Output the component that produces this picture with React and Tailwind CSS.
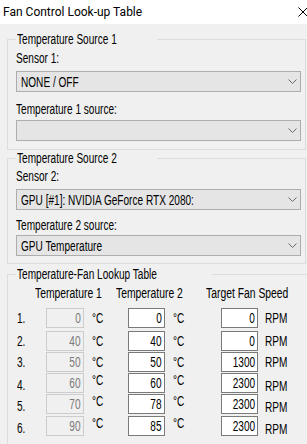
import React from "react";

function T({ children, className = "" }) {
  return (
    <span
      className={
        "inline-block origin-left scale-x-[0.72] whitespace-nowrap text-[14px] leading-[14px] align-top " +
        className
      }
    >
      {children}
    </span>
  );
}

function Chevron() {
  return (
    <svg width="9" height="5" viewBox="0 0 9 5" className="shrink-0">
      <path d="M0.5 0.5 L4.5 4.5 L8.5 0.5" fill="none" stroke="#6a6a6a" strokeWidth="1" />
    </svg>
  );
}

function Drop({ text, className = "" }) {
  return (
    <div
      className={
        "h-[21px] border border-[#adadad] bg-[#e5e5e5] flex items-center justify-between pl-[4px] pr-[3px] " +
        className
      }
    >
      <T className="text-black">{text}</T>
      <Chevron />
    </div>
  );
}

function Box({ v, disabled }) {
  return (
    <div
      className={
        disabled
          ? "h-[20px] border border-[#cccccc] bg-[#f0f0f0] flex items-center justify-end pr-[2px] overflow-hidden"
          : "h-[20px] border border-[#7a7a7a] bg-white flex items-center justify-end pr-[2px] overflow-hidden"
      }
    >
      <span
        className={
          disabled
            ? "inline-block origin-right scale-x-[0.72] whitespace-nowrap text-[14px] leading-[14px] align-top text-[#7a7a7a]"
            : "inline-block origin-right scale-x-[0.72] whitespace-nowrap text-[14px] leading-[14px] align-top text-black"
        }
      >
        {v}
      </span>
    </div>
  );
}

const rows = [
  { n: "1.", a: 0, b: 0, c: 0, mt: "mt-0", shift: false },
  { n: "2.", a: 40, b: 40, c: 0, mt: "mt-[3px]", shift: false },
  { n: "3.", a: 50, b: 50, c: 1300, mt: "mt-[1px]", shift: false },
  { n: "4.", a: 60, b: 60, c: 2300, mt: "mt-0", shift: true },
  { n: "5.", a: 70, b: 78, c: 2300, mt: "mt-[1px]", shift: true },
  { n: "6.", a: 90, b: 85, c: 2300, mt: "mt-[2px]", shift: true },
];

export default function App() {
  return (
    <div className="w-[307px] h-[444px] overflow-hidden bg-[#f0f0f0] font-['Liberation_Sans',Arial,sans-serif] text-[14px] leading-[14px] text-black">
      {/* title bar */}
      <div className="h-[24px] bg-white flex items-center justify-between pl-[3px]">
        <span className="font-['Roboto',sans-serif] text-[12px] leading-[14px] text-black">
          Fan Control Look-up Table
        </span>
        <svg width="10" height="10" viewBox="0 0 10 10" className="mr-[-1px]">
          <path d="M0.5 0.5 L9.5 9.5 M9.5 0.5 L0.5 9.5" stroke="#000" strokeWidth="1" fill="none" />
        </svg>
      </div>

      {/* group 1 */}
      <fieldset className="mt-[8px] ml-[7px] mr-[1px] border border-[#dcdcdc] pl-[8px] pr-[4px] pb-[8px]">
        <legend className="px-[1px] h-[14px] leading-[14px]">
          <T>Temperature Source 1</T>
        </legend>
        <div className="mt-[5px] h-[14px]">
          <T>Sensor 1:</T>
        </div>
        <Drop text="NONE / OFF" className="mt-[6px]" />
        <div className="mt-[10px] h-[14px]">
          <T>Temperature 1 source:</T>
        </div>
        <Drop text="" className="mt-[4px]" />
      </fieldset>

      {/* group 2 */}
      <fieldset className="mt-[1px] ml-[7px] mr-[1px] border border-[#dcdcdc] pl-[8px] pr-[4px] pb-[7px]">
        <legend className="px-[1px] h-[14px] leading-[14px]">
          <T>Temperature Source 2</T>
        </legend>
        <div className="mt-[4px] h-[14px]">
          <T>Sensor 2:</T>
        </div>
        <Drop text="GPU [#1]: NVIDIA GeForce RTX 2080:" className="mt-[6px]" />
        <div className="mt-[8px] h-[14px]">
          <T>Temperature 2 source:</T>
        </div>
        <Drop text="GPU Temperature" className="mt-[3px]" />
      </fieldset>

      {/* group 3 */}
      <fieldset className="mt-[3px] ml-[7px] mr-[1px] border border-[#dcdcdc] pl-[8px] pr-[4px] pb-[12px]">
        <legend className="px-[1px] h-[14px] leading-[14px]">
          <T>Temperature-Fan Lookup Table</T>
        </legend>
        <div className="mt-[5px] h-[14px] flex">
          <div className="w-[100px] pl-[19px]">
            <T className="scale-x-[0.74]">Temperature 1</T>
          </div>
          <div className="w-[90px]">
            <T className="scale-x-[0.74]">Temperature 2</T>
          </div>
          <div>
            <T className="scale-x-[0.74]">Target Fan Speed</T>
          </div>
        </div>
        <div className="mt-[8px] flex flex-col">
          {rows.map((r) => (
            <div
              key={r.n}
              className={
                "grid grid-cols-[30px_38px_44px_37px_56px_37px_1fr] h-[20px] items-center " + r.mt
              }
            >
              <div className={r.shift ? "pl-[1px] mt-[4px] h-[14px]" : "pl-[1px] h-[14px]"}>
                <T>{r.n}</T>
              </div>
              <Box v={r.a} disabled />
              <div className={r.shift ? "pl-[8px] mt-[-5px] h-[14px]" : "pl-[8px] h-[14px]"}>
                <T>°C</T>
              </div>
              <Box v={r.b} />
              <div className={r.shift ? "pl-[8px] mt-[-5px] h-[14px]" : "pl-[8px] h-[14px]"}>
                <T>°C</T>
              </div>
              <Box v={r.c} />
              <div className={r.shift ? "pl-[7px] mt-[7px] h-[14px]" : "pl-[7px] h-[14px]"}>
                <T>RPM</T>
              </div>
            </div>
          ))}
        </div>
      </fieldset>
    </div>
  );
}
